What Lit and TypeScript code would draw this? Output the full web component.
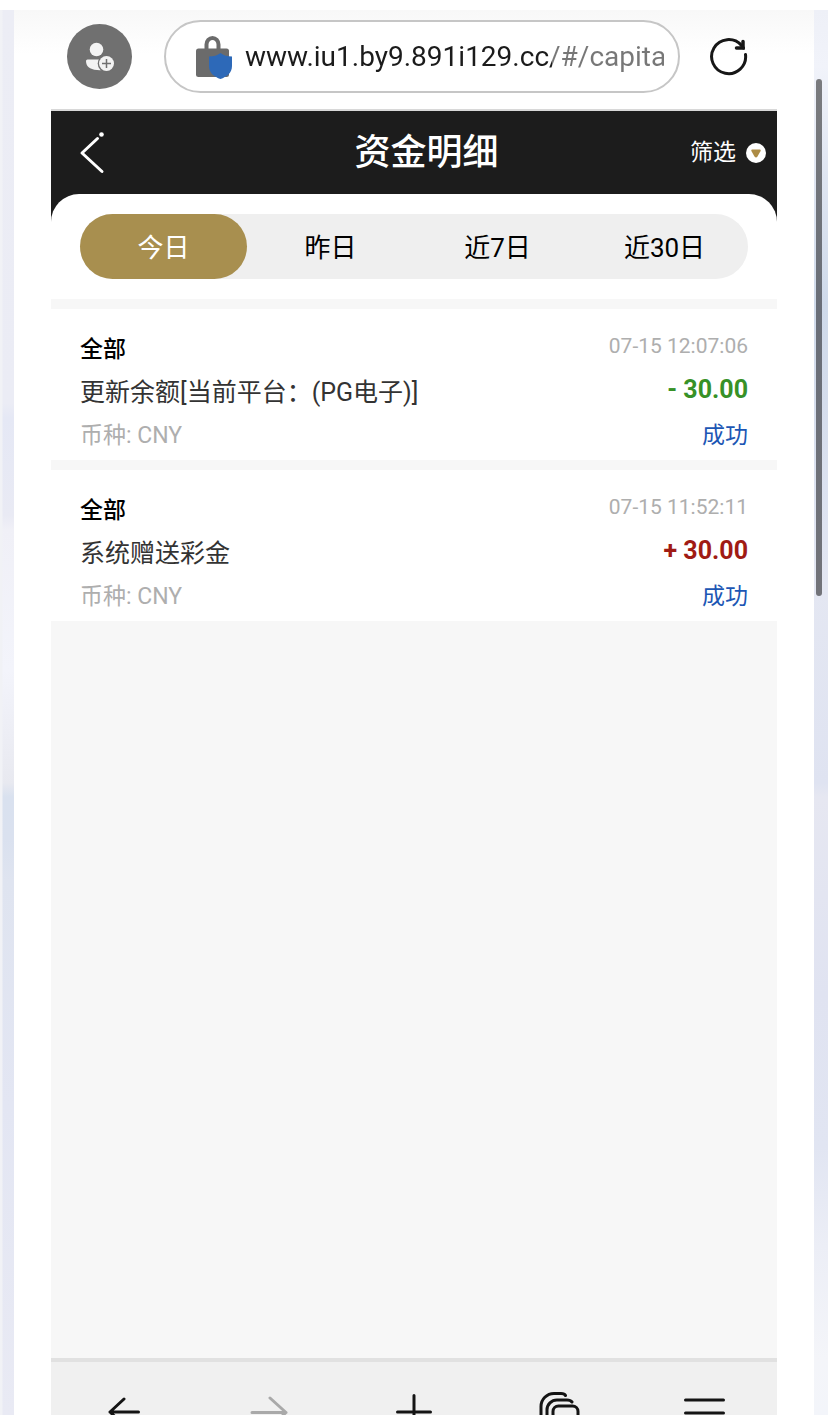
import { LitElement, html, css } from "lit";
import { customElement, state } from "lit/decorators.js";
import { classMap } from "lit/directives/class-map.js";

interface Entry {
  category: string;
  time: string;
  detail: string;
  amount: string;
  gain: boolean;
  currency: string;
  status: string;
}

const RANGES = ["今日", "昨日", "近7日", "近30日"];

const ENTRIES: Entry[] = [
  { category: "全部", time: "07-15 12:07:06", detail: "更新余额[当前平台：(PG电子)]", amount: "- 30.00", gain: false, currency: "CNY", status: "成功" },
  { category: "全部", time: "07-15 11:52:11", detail: "系统赠送彩金", amount: "+ 30.00", gain: true, currency: "CNY", status: "成功" },
];

@customElement("browser-bar")
class BrowserBar extends LitElement {
  static styles = css`
    :host { display: block; }
    * { box-sizing: border-box; }
    .bar { display: flex; align-items: center; padding: 10px 29px 16px 16px; border-bottom: 2px solid #d8d8d8; }
    button { border: 0; padding: 0; background: none; display: block; flex: none; }
    .avatar { margin-right: 32px; }
    .reload { margin-left: 30px; }
    svg { display: block; }
    .pill { flex: 1; min-width: 0; height: 73px; border: 2px solid #c6c6c6; border-radius: 37px; background: #fff;
      display: flex; align-items: center; gap: 12px; padding: 0 14px 0 30px; }
    .pill svg { flex: none; }
    .url { flex: 1; min-width: 0; border: 0; padding: 0; outline: 0; height: 44px;
      font: 28px/44px Roboto, "Noto Sans CJK SC", sans-serif; color: transparent;
      background: linear-gradient(90deg, #1b1b1b 307px, #777 307px); -webkit-background-clip: text; background-clip: text; }
  `;
  render() {
    return html`<header class="bar">
      <button class="avatar" aria-label="账户">
        <svg width="65" height="65" viewBox="0 0 65 65">
          <circle cx="32.5" cy="32.5" r="32.5" fill="#707070" />
          <circle cx="29.5" cy="25.5" r="6.8" fill="#f3f3f3" />
          <path d="M20.5 35.5H39V45.500Q34 46.500 30 46C22.500 45.500 19 42 19 37A1.500 1.500 0 0 1 20.500 35.500Z" fill="#f3f3f3" />
          <circle cx="39.5" cy="39.500" r="8.800" fill="#707070" />
          <circle cx="39.5" cy="39.500" r="7.500" fill="#f3f3f3" />
          <path d="M39.500 35V44M35 39.500H44" stroke="#707070" stroke-width="1.500" fill="none" />
        </svg>
      </button>
      <div class="pill">
        <svg width="37" height="44" viewBox="0 0 37 44" aria-hidden="true">
          <path d="M10.500 15V9.500A6 6.500 0 0 1 22.500 9.500V15" fill="none" stroke="#6b6b6b" stroke-width="4" />
          <rect x="0" y="13.500" width="33" height="28.500" rx="2.500" fill="#6b6b6b" />
          <path d="M24.500 18Q29 21.500 36 21.500V31C36 38 30.500 42 24.500 44C18.500 42 13 38 13 31V21.500Q20 21.500 24.500 18Z" fill="#2d69b8" />
        </svg>
        <input class="url" type="text" aria-label="网址" .value=${"www.iu1.by9.891i129.cc/#/capita"} />
      </div>
      <button class="reload" aria-label="刷新">
        <svg width="38" height="38" viewBox="0 0 38 38" fill="none" stroke="#171717" stroke-width="3" stroke-linecap="round">
          <path d="M35.500 16.500A17 17 0 1 1 31.500 7.500L33.500 10" />
          <path d="M33 3.500V10H26.500" stroke-width="3.500" />
        </svg>
      </button>
    </header>`;
  }
}

@customElement("ledger-entry")
class LedgerEntry extends LitElement {
  static properties = { entry: { attribute: false } };
  declare entry: Entry;
  static styles = css`
    :host { display: block; }
    .card { background: #fff; padding: 19px 29px 3px; }
    .row { display: flex; justify-content: space-between; height: 43px; line-height: 43px; font-size: 23px; }
    .category { font-weight: 500; color: #000; }
    .time { font-size: 21px; line-height: 37px; color: #aeaeae; }
    .detail { font-size: 25px; color: #333; }
    .amount { font-size: 25px; line-height: 37px; font-weight: 700; color: #379127; }
    .gain { color: #a01b14; }
    .currency { color: #aeaeae; }
    .status { color: #1c56b4; }
  `;
  render() {
    const e = this.entry;
    return html`<article class="card">
      <div class="row"><span class="category">${e.category}</span><time class="time">${e.time}</time></div>
      <div class="row"><span class="detail">${e.detail}</span><span class=${classMap({ amount: true, gain: e.gain })}>${e.amount}</span></div>
      <div class="row"><span class="currency">币种: ${e.currency}</span><span class="status">${e.status}</span></div>
    </article>`;
  }
}

@customElement("tool-bar")
class ToolBar extends LitElement {
  static styles = css`
    :host { display: block; }
    .tools { display: grid; grid-template-columns: repeat(5, 1fr); height: 53px; overflow: hidden; background: #f0f0f0; border-top: 4px solid #e1e1e1; }
    button { border: 0; background: none; padding: 26px 0 0; display: flex; justify-content: center; align-items: flex-start; height: 74px; color: #141414; }
    button:disabled { color: #a9a9a9; }
    svg { flex: none; fill: none; stroke: currentColor; stroke-width: 3; stroke-linecap: round; stroke-linejoin: round; }
  `;
  render() {
    return html`<nav class="tools">
      <button aria-label="后退"><svg width="48" height="48" viewBox="0 0 48 48"><path d="M38.500 24H10L24 11M10 24L24 37" /></svg></button>
      <button aria-label="前进" disabled><svg width="48" height="48" viewBox="0 0 48 48"><path d="M7 24.500H41L25 10M41 24.500L25 39" /></svg></button>
      <button aria-label="新建"><svg width="48" height="48" viewBox="0 0 48 48"><path d="M24 7.500V40.500M7.500 24H40.500" /></svg></button>
      <button aria-label="标签页"><svg width="48" height="48" viewBox="0 0 48 48">
        <path d="M30.500 7.500Q29.500 5.500 26 5.500H19A13 13 0 0 0 6 18.500V27Q6 30 8 31" />
        <path d="M37 14Q35.500 12 32 12H22A10 10 0 0 0 12 22V33Q12 36 14 37" />
        <rect x="18" y="18" width="25" height="24" rx="5.500" /></svg></button>
      <button aria-label="菜单"><svg width="48" height="48" viewBox="0 0 48 48"><path d="M5.500 12H43.500M5.500 25H43.500M5.500 38H43.500" /></svg></button>
    </nav>`;
  }
}

@customElement("app-root")
class AppRoot extends LitElement {
  @state() private active = 0;
  static styles = css`
    :host { display: block; font-family: Roboto, "Noto Sans CJK SC", sans-serif; background: #fff; }
    * { box-sizing: border-box; }
    button { font-family: inherit; border: 0; padding: 0; background: none; }
    .frame { display: flex; height: 100vh; padding-top: 10px; overflow: hidden; }
    .rail { flex: none; width: 14px; }
    .left { background: linear-gradient(90deg, #f1f2f6 2px, transparent 3px),
      linear-gradient(#ecedf5 0, #ebecf5 28%, #e5e8f5 29%, #e9eaf4 36%, #f0f0f7 37%, #f3f4fb 47%, #e8e9f0 55%, #d9e1ef 56%, #dae1ef 59%, #dfe4f0 62%, #e3e6f3 78%, #e9eaf4 100%); }
    .right { padding: 69px 0 0 2px; background: linear-gradient(#eef0f7 0, #f1f3fa 4%, #dfe5f1 12%, #cfdaea 21%, #d5ddec 28%, #dce2f0 34%, #e4e7f2 41%, #dfe3f1 55%, #e6e7f1 56%, #e0e3f1 70%, #e1e5f2 81%, #eceef6 88%, #f4f5f9 96%, #f3f5fa 100%); }
    .thumb { width: 6px; height: 517px; border-radius: 3px; background: linear-gradient(#7a7b7e, #696e78 45%, #727379); }
    .phone { flex: 1; min-width: 0; display: flex; flex-direction: column; padding: 0 37px; background: linear-gradient(#f8f8f8, #fff 44px); }
    .page { flex: 1; min-height: 0; background: #f7f7f7; }
    .top { background: #1c1c1c; }
    .title-bar { display: grid; grid-template-columns: 1fr auto 1fr; align-items: center; height: 83px; padding: 0 11px 0 28px; color: #fff; }
    .back { justify-self: start; }
    .back svg, .dot { display: block; }
    h1 { margin: 0; padding-left: 8px; font-size: 36px; line-height: 48px; font-weight: 500; }
    .filter { justify-self: end; display: flex; align-items: center; gap: 10px; font-size: 23px; line-height: 32px; color: #fff; }
    .sheet { background: #fff; border-radius: 28px 28px 0 0; padding: 20px 29px; }
    .tabs { display: grid; grid-template-columns: repeat(4, 1fr); background: #efefef; border-radius: 33px; }
    .tab { height: 65px; padding-bottom: 3px; border-radius: 33px; font-size: 26px; color: #000; }
    .active { background: #a88f4f; color: #fff; }
    .list { display: grid; gap: 10px; padding-top: 10px; }
  `;
  render() {
    return html`<div class="frame">
      <div class="rail left"></div>
      <div class="phone">
        <browser-bar></browser-bar>
        <main class="page">
          <div class="top">
            <div class="title-bar">
              <button class="back" aria-label="返回">
                <svg width="28" height="44" viewBox="0 0 28 44" fill="none" stroke="#fff" stroke-width="3" stroke-linecap="round" stroke-linejoin="round">
                  <path d="M18.500 7.500L3 22L23 40.500" /><circle cx="22.500" cy="3.500" r="2.300" fill="#fff" stroke="none" />
                </svg>
              </button>
              <h1>资金明细</h1>
              <button class="filter">筛选
                <svg class="dot" width="20" height="20" viewBox="0 0 20 20" aria-hidden="true">
                  <circle cx="10" cy="10" r="10" fill="#fff" />
                  <path d="M6 6.500H14Q15.200 6.500 14.600 8L11.500 13.500Q10 15.300 8.500 13.500L5.400 8Q4.800 6.500 6 6.500Z" fill="#ad8c45" />
                </svg>
              </button>
            </div>
            <div class="sheet">
              <div class="tabs" role="tablist">
                ${RANGES.map((label, i) => html`<button role="tab" aria-selected=${i === this.active}
                  class=${classMap({ tab: true, active: i === this.active })} @click=${() => (this.active = i)}>${label}</button>`)}
              </div>
            </div>
          </div>
          <section class="list">${ENTRIES.map((e) => html`<ledger-entry .entry=${e}></ledger-entry>`)}</section>
        </main>
        <tool-bar></tool-bar>
      </div>
      <div class="rail right"><div class="thumb"></div></div>
    </div>`;
  }
}
